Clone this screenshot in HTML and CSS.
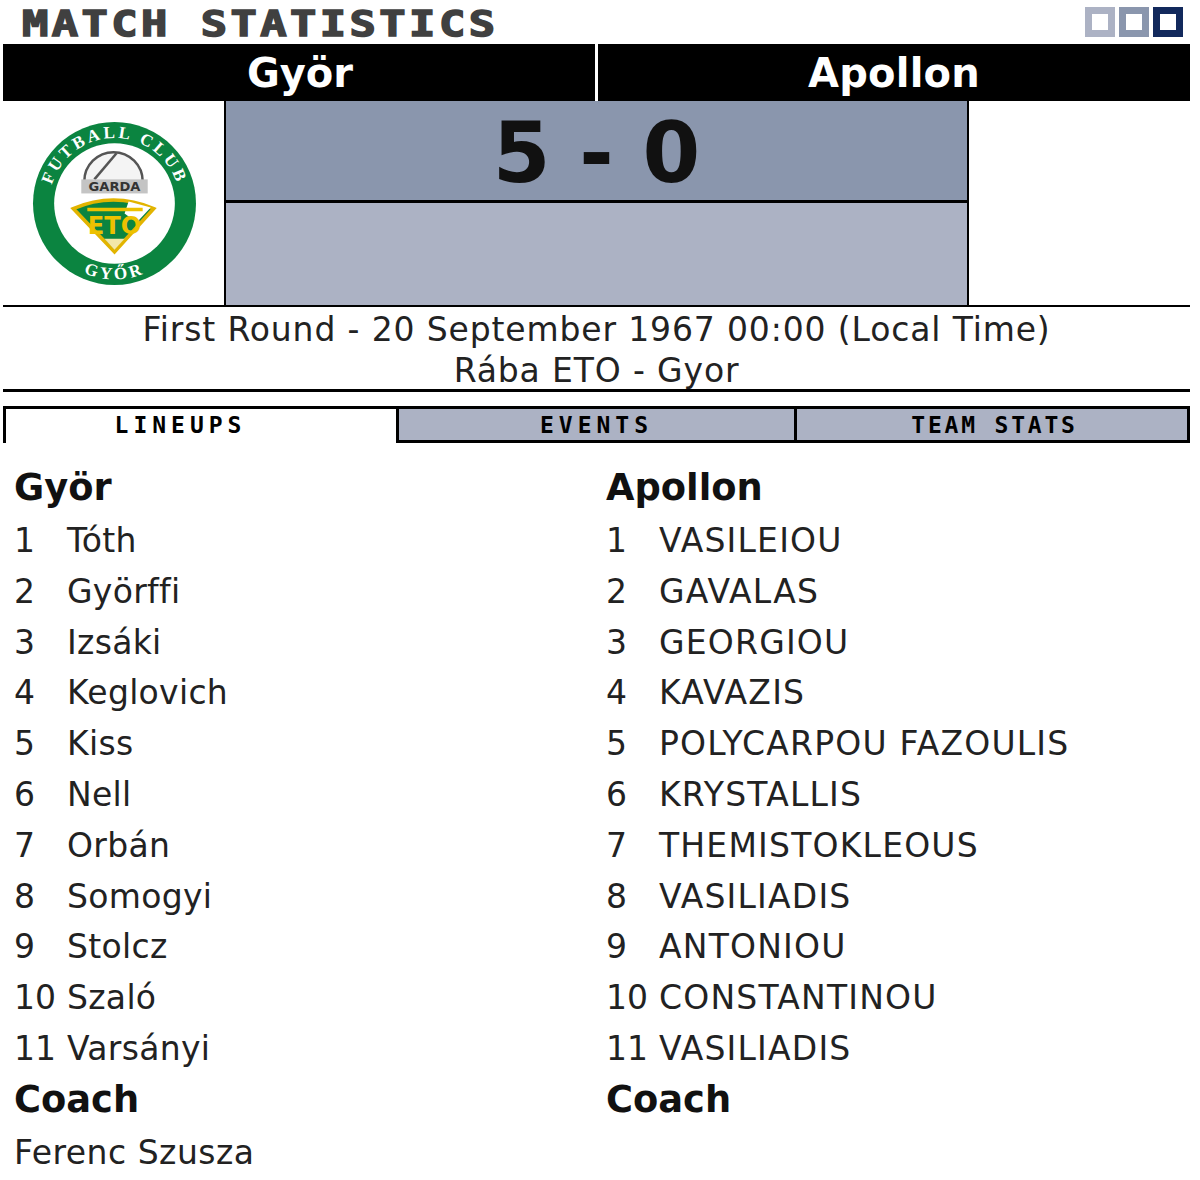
FILE: index.html
```html
<!DOCTYPE html>
<html lang="en">
<head>
<meta charset="utf-8">
<title>Match Statistics</title>
<link rel="stylesheet" href="styles.css">
</head>
<body>
<main class="page">
  <header class="title-row">
    <h1 class="title">MATCH STATISTICS</h1>
    <div class="switches">
      <span class="switch switch-light"></span>
      <span class="switch switch-mid"></span>
      <span class="switch switch-dark"></span>
    </div>
  </header>
  <div class="teams">
    <div class="team">Györ</div>
    <div class="team">Apollon</div>
  </div>
  <section class="score-row">
    <div class="crest-cell">
      <svg class="crest" viewBox="0 0 164 164" aria-label="Györ crest">
        <circle cx="82" cy="82" r="81" fill="#0b8440"/>
        <circle cx="82" cy="82" r="60" fill="#fff"/>
        <defs>
          <path id="arcTop" d="M17 82 A65 65 0 0 1 147 82"/>
          <path id="arcBottom" d="M22 128 A76 76 0 0 0 142 128"/>
        </defs>
        <text class="crest-text crest-text-top"><textPath href="#arcTop" startOffset="50%" text-anchor="middle">FUTBALL CLUB</textPath></text>
        <text class="crest-text crest-text-bottom"><textPath href="#arcBottom" startOffset="50%" text-anchor="middle">GYŐR</textPath></text>
        <path d="M52 60 A29 29 0 0 1 110 60" fill="#f4f4f4" stroke="#555" stroke-width="2.5"/>
        <path d="M62 58 L84 32" stroke="#555" stroke-width="2.5" fill="none"/>
        <rect x="49" y="58" width="66" height="14" fill="#c4c4c4"/>
        <text class="crest-mini" x="82" y="70" text-anchor="middle">GARDA</text>
        <path d="M41 87 Q81 70 121 87 L82 130 Z" fill="#0b8440" stroke="#e2b400" stroke-width="3.5"/>
        <path d="M96 80 L118 86 L104 101 L92 92 Z" fill="#fff"/>
        <path d="M72 117 L92 117 L82 128 Z" fill="#f3e7a8"/>
        <path d="M55 88 H110" stroke="#edc100" stroke-width="3.5"/>
        <text class="crest-eto" x="82" y="112" text-anchor="middle">ETO</text>
      </svg>
    </div>
    <div class="score-cell">
      <div class="score">5 - 0</div>
      <div class="score-extra"></div>
    </div>
    <div class="away-cell"></div>
  </section>
  <section class="info">
    <div>First Round - 20 September 1967 00:00 (Local Time)</div>
    <div>Rába ETO - Gyor</div>
  </section>
  <nav class="tabs">
    <div class="tab tab-active">LINEUPS</div>
    <div class="tab tab-events">EVENTS</div>
    <div class="tab tab-stats">TEAM STATS</div>
  </nav>
  <section class="lineups">
    <div class="side side-home">
      <h2 class="side-title">Györ</h2>
      <ol class="players">
        <li><span class="num">1</span>Tóth</li>
        <li><span class="num">2</span>Györffi</li>
        <li><span class="num">3</span>Izsáki</li>
        <li><span class="num">4</span>Keglovich</li>
        <li><span class="num">5</span>Kiss</li>
        <li><span class="num">6</span>Nell</li>
        <li><span class="num">7</span>Orbán</li>
        <li><span class="num">8</span>Somogyi</li>
        <li><span class="num">9</span>Stolcz</li>
        <li><span class="num">10</span>Szaló</li>
        <li><span class="num">11</span>Varsányi</li>
      </ol>
      <h2 class="side-title coach-title">Coach</h2>
      <div class="coach">Ferenc Szusza</div>
    </div>
    <div class="side side-away">
      <h2 class="side-title">Apollon</h2>
      <ol class="players">
        <li><span class="num">1</span>VASILEIOU</li>
        <li><span class="num">2</span>GAVALAS</li>
        <li><span class="num">3</span>GEORGIOU</li>
        <li><span class="num">4</span>KAVAZIS</li>
        <li><span class="num">5</span>POLYCARPOU FAZOULIS</li>
        <li><span class="num">6</span>KRYSTALLIS</li>
        <li><span class="num">7</span>THEMISTOKLEOUS</li>
        <li><span class="num">8</span>VASILIADIS</li>
        <li><span class="num">9</span>ANTONIOU</li>
        <li><span class="num">10</span>CONSTANTINOU</li>
        <li><span class="num">11</span>VASILIADIS</li>
      </ol>
      <h2 class="side-title coach-title">Coach</h2>
    </div>
  </section>
</main>
</body>
</html>
```
FILE: styles.css
```css
* { box-sizing: border-box; }
html, body { margin: 0; padding: 0; background: #fff; }
body { font-family: "DejaVu Sans", Verdana, sans-serif; color: #222; overflow: hidden; }
.page { width: 1200px; height: 1180px; padding: 0 10px 0 3px; }
.title-row { height: 44px; display: flex; justify-content: space-between; align-items: flex-start; padding: 7px 7px 0 19px; }
.title { margin: 0; font: bold 35px/34px "DejaVu Sans Mono", monospace; color: #404040; -webkit-text-stroke: 1.5px #404040; letter-spacing: 2.75px; white-space: nowrap; transform: scaleX(1.25); transform-origin: left top; }
.switches { display: flex; gap: 4px; }
.switch { width: 30px; height: 30px; background: #fff; border: 7px solid; }
.switch-light { border-color: #acb2c4; }
.switch-mid { border-color: #8a96ad; }
.switch-dark { border-color: #12295c; }
.teams { display: flex; height: 57px; background: #000; color: #fff; font-size: 40px; font-weight: bold; line-height: 59px; }
.team { text-align: center; }
.team:first-child { width: 592px; padding-left: 2px; }
.team:last-child { flex: 1; border-left: 3px solid #fff; letter-spacing: 0.2px; }
.score-row { display: flex; height: 206px; border-bottom: 2px solid #000; }
.crest-cell { width: 221px; display: flex; padding: 20px 0 0 29px; }
.crest { width: 165px; height: 165px; display: block; }
.crest-text { font: bold 17px "Liberation Serif", serif; fill: #fff; }
.crest-text-top { letter-spacing: 3px; }
.crest-text-bottom { letter-spacing: 3px; }
.crest-mini { font: bold 13px "DejaVu Sans", sans-serif; fill: #333; }
.crest-eto { font: bold 24px "DejaVu Sans", sans-serif; fill: #edc100; }
.score-cell { width: 745px; border-left: 2px solid #000; border-right: 2px solid #000; display: flex; flex-direction: column; }
.score { height: 102px; background: #8a96ad; border-bottom: 3px solid #000; color: #111; font-size: 83px; font-weight: bold; line-height: 105px; text-align: center; }
.score-extra { flex: 1; background: #acb2c4; }
.away-cell { flex: 1; }
.info { height: 85px; border-bottom: 3px solid #000; text-align: center; font-size: 33px; line-height: 40.5px; padding-top: 3px; color: #222; letter-spacing: 0.86px; }
.tabs { margin-top: 14px; display: flex; height: 37px; }
.tab { font: bold 23px/32px "DejaVu Sans Mono", monospace; color: #000; text-align: center; border-top: 3px solid #000; }
.tab-active { width: 393px; background: #fff; border-left: 3px solid #000; letter-spacing: 5px; padding-right: 41px; }
.tab-events { width: 398px; background: #acb2c4; border-left: 3px solid #000; border-bottom: 3px solid #000; letter-spacing: 5px; }
.tab-stats { flex: 1; background: #acb2c4; border-left: 3px solid #000; border-right: 3px solid #000; border-bottom: 3px solid #000; letter-spacing: 2.8px; padding-left: 5px; }
.lineups { display: flex; padding: 23px 0 0 11px; }
.side { flex: none; width: 592px; }
.side-title { margin: 0; font-size: 36.8px; font-weight: bold; line-height: 44px; color: #111; }
.players { list-style: none; margin: 6px 0 0; padding: 0; }
.players li { height: 50.8px; line-height: 50px; font-size: 33px; color: #222; white-space: nowrap; }
.side-home .players li { letter-spacing: 0.3px; }
.side-away .players li { letter-spacing: 1.2px; }
.num { display: inline-block; width: 53px; letter-spacing: 0; }
.coach-title { margin-top: 3px; }
.coach { font-size: 33px; line-height: 50px; margin-top: 6px; color: #222; letter-spacing: 0.5px; }
```
